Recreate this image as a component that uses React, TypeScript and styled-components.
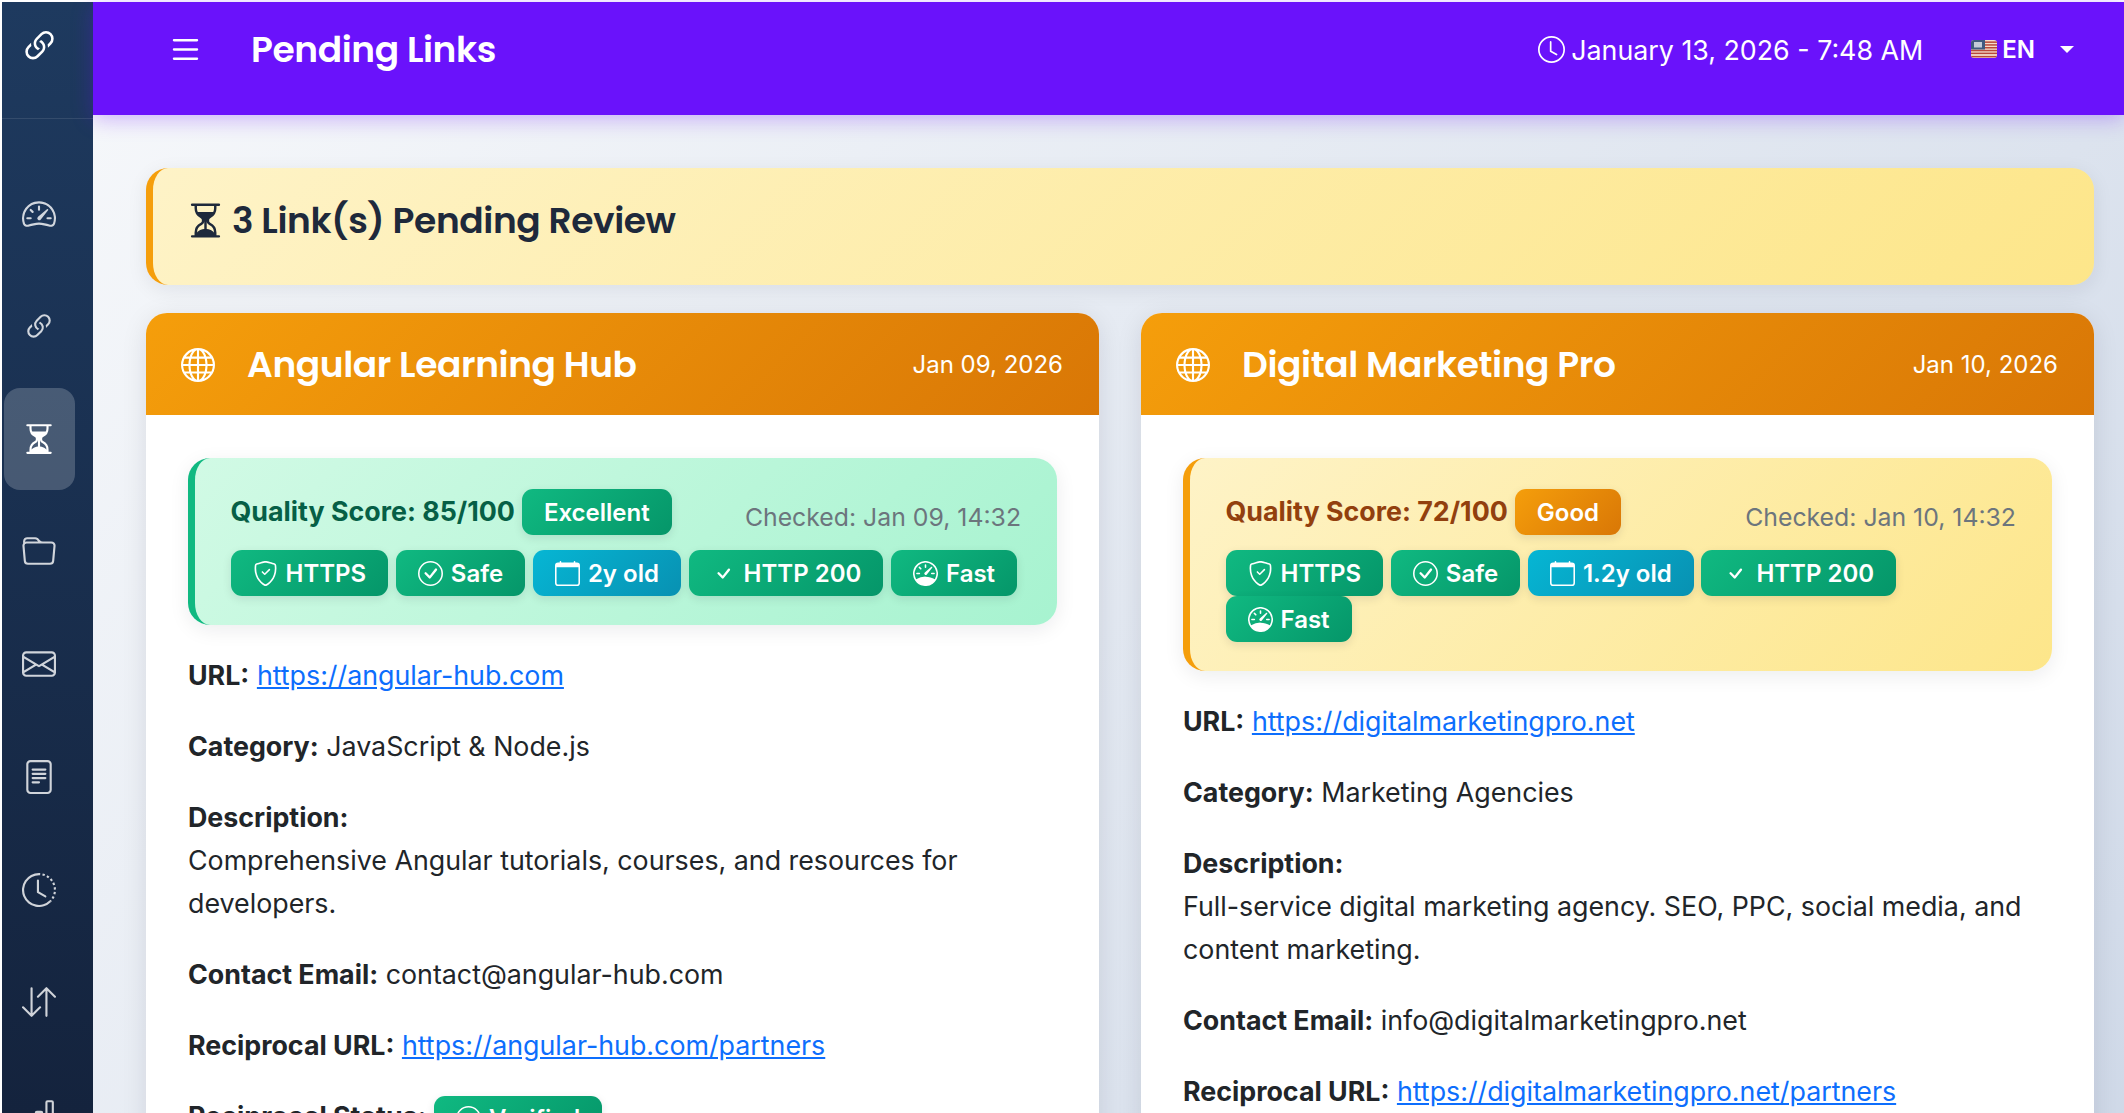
import React from 'react'
import styled, {createGlobalStyle, css} from 'styled-components'
import {
	BsArrowDownUp,
	BsBarChart,
	BsCalendar,
	BsCheck,
	BsCheckCircle,
	BsClock,
	BsClockHistory,
	BsEnvelope,
	BsFileText,
	BsFolder,
	BsGlobe,
	BsHourglassSplit,
	BsLink45Deg,
	BsList,
	BsShieldCheck,
	BsSpeedometer,
	BsSpeedometer2,
} from 'react-icons/bs'

type Tone = 'green' | 'amber' | 'blue'

type LinkCard = {
	title: string
	date: string
	score: string
	grade: string
	tone: Tone
	checked: string
	age: string
	url: string
	category: string
	description: string
	email: string
	reciprocal: string
}

const cards: LinkCard[] = [
	{
		title: 'Angular Learning Hub',
		date: 'Jan 09, 2026',
		score: 'Quality Score: 85/100',
		grade: 'Excellent',
		tone: 'green',
		checked: 'Checked: Jan 09, 14:32',
		age: '2y old',
		url: 'https://angular-hub.com',
		category: 'JavaScript & Node.js',
		description: 'Comprehensive Angular tutorials, courses, and resources for developers.',
		email: 'contact@angular-hub.com',
		reciprocal: 'https://angular-hub.com/partners',
	},
	{
		title: 'Digital Marketing Pro',
		date: 'Jan 10, 2026',
		score: 'Quality Score: 72/100',
		grade: 'Good',
		tone: 'amber',
		checked: 'Checked: Jan 10, 14:32',
		age: '1.2y old',
		url: 'https://digitalmarketingpro.net',
		category: 'Marketing Agencies',
		description: 'Full-service digital marketing agency. SEO, PPC, social media, and content marketing.',
		email: 'info@digitalmarketingpro.net',
		reciprocal: 'https://digitalmarketingpro.net/partners',
	},
]

const navIcons = [
	BsSpeedometer2,
	BsLink45Deg,
	BsHourglassSplit,
	BsFolder,
	BsEnvelope,
	BsFileText,
	BsClockHistory,
	BsArrowDownUp,
	BsBarChart,
]

const UsFlag = () => (
	<svg width="26" height="18" viewBox="0 0 26 18">
		<defs>
			<clipPath id="flagClip">
				<rect width="26" height="18" rx="3" />
			</clipPath>
		</defs>
		<g clipPath="url(#flagClip)">
			<rect width="26" height="18" fill="#f3dccb" />
			{[1.4, 4.2, 7, 9.8, 12.6, 15.9].map((y) => (
				<rect key={y} y={y} width="26" height="1.5" fill="#b9483a" />
			))}
			<rect width="14" height="9.5" fill="#3f5a80" />
			<rect x="3" y="2" width="8" height="5.5" fill="#c3cbd8" />
		</g>
	</svg>
)

const Card = ({card}: {card: LinkCard}) => (
	<CardBox>
		<CardHeader>
			<CardHeading>
				<BsGlobe />
				<span>{card.title}</span>
			</CardHeading>
			<CardDate>{card.date}</CardDate>
		</CardHeader>
		<CardBody>
			<QualityBox $tone={card.tone}>
				<QualityTop>
					<ScoreWrap>
						<ScoreText $tone={card.tone}>{card.score}</ScoreText>
						<Pill $tone={card.tone === 'green' ? 'green' : 'amber'}>{card.grade}</Pill>
					</ScoreWrap>
					<Checked>{card.checked}</Checked>
				</QualityTop>
				<PillRow>
					<Pill $tone="green">
						<BsShieldCheck />
						HTTPS
					</Pill>
					<Pill $tone="green">
						<BsCheckCircle />
						Safe
					</Pill>
					<Pill $tone="blue">
						<BsCalendar />
						{card.age}
					</Pill>
					<Pill $tone="green">
						<BsCheck />
						HTTP 200
					</Pill>
					<Pill $tone="green">
						<BsSpeedometer />
						Fast
					</Pill>
				</PillRow>
			</QualityBox>
			<Field>
				<b>URL:</b> <a href={card.url}>{card.url}</a>
			</Field>
			<Field>
				<b>Category:</b> {card.category}
			</Field>
			<Field>
				<b>Description:</b>
				<br />
				{card.description}
			</Field>
			<Field>
				<b>Contact Email:</b> {card.email}
			</Field>
			<Field>
				<b>Reciprocal URL:</b> <a href={card.reciprocal}>{card.reciprocal}</a>
			</Field>
			<Field>
				<b>Reciprocal Status:</b>{' '}
				<Pill $tone="green">
					<BsCheckCircle />
					Verified
				</Pill>
			</Field>
		</CardBody>
	</CardBox>
)

const App = () => (
	<>
		<GlobalStyle />
		<Shell>
			<Sidebar>
				<Brand>
					<BsLink45Deg />
				</Brand>
				<Nav>
					{navIcons.map((Icon, i) => (
						<NavItem key={i} $active={i === 2}>
							<Icon />
						</NavItem>
					))}
				</Nav>
			</Sidebar>
			<Content>
				<TopBar>
					<TopLeft>
						<Burger>
							<BsList />
						</Burger>
						<PageTitle>Pending Links</PageTitle>
					</TopLeft>
					<TopRight>
						<Clock>
							<BsClock />
							January 13, 2026 - 7:48 AM
						</Clock>
						<Lang>
							<UsFlag />
							EN
							<Caret />
						</Lang>
					</TopRight>
				</TopBar>
				<Main>
					<Banner>
						<BsHourglassSplit />
						<h2>3 Link(s) Pending Review</h2>
					</Banner>
					<CardGrid>
						{cards.map((c) => (
							<Card key={c.title} card={c} />
						))}
					</CardGrid>
				</Main>
			</Content>
		</Shell>
	</>
)

export default App

const GlobalStyle = createGlobalStyle`
	html, body {
		margin: 0;
		height: 100%;
		overflow: hidden;
		background: #fff;
	}
	* {
		box-sizing: border-box;
	}
	body {
		font-family: Inter, "Liberation Sans", sans-serif;
		color: #212529;
	}
`

const heading = `Poppins, "Noto Sans", Inter, sans-serif`

const gradients = {
	green: 'linear-gradient(135deg, #10b981, #059669)',
	amber: 'linear-gradient(135deg, #f59e0b, #d97706)',
	blue: 'linear-gradient(135deg, #06b6d4, #0891b2)',
}

const Shell = styled.div`
	display: flex;
	height: 1113px;
	padding: 2px 0 0 2px;
	overflow: hidden;
`

const Sidebar = styled.aside`
	width: 91px;
	flex-shrink: 0;
	overflow: hidden;
	background: linear-gradient(180deg, #1e3a5f 0%, #14233d 100%);
`

const Brand = styled.div`
	height: 117px;
	display: flex;
	align-items: center;
	justify-content: center;
	padding: 0 17px 27px 0;
	border-bottom: 1px solid rgba(255, 255, 255, 0.1);
	color: #fff;
	font-size: 41px;
`

const Nav = styled.nav`
	display: flex;
	flex-direction: column;
	align-items: flex-start;
	padding: 44px 0 0 1.5px;
	gap: 10.6px;
`

const NavItem = styled.div<{$active?: boolean}>`
	width: 71px;
	height: 102px;
	flex-shrink: 0;
	display: flex;
	align-items: center;
	justify-content: center;
	border-radius: 16px;
	font-size: 34px;
	color: rgba(255, 255, 255, 0.8);
	${(p) =>
		p.$active &&
		css`
			background: rgba(255, 255, 255, 0.2);
			color: #fff;
		`}
`

const Content = styled.div`
	flex: 1;
	min-width: 0;
	display: flex;
	flex-direction: column;
`

const TopBar = styled.header`
	height: 113px;
	flex-shrink: 0;
	display: flex;
	align-items: flex-start;
	justify-content: space-between;
	padding: 22px 50px 0 74px;
	background: #6a12fb;
	box-shadow: 0 4px 20px rgba(106, 18, 251, 0.3);
	position: relative;
	z-index: 1;
	color: #fff;
`

const TopLeft = styled.div`
	display: flex;
	align-items: center;
	height: 50px;
	gap: 47px;
`

const Burger = styled.div`
	font-size: 37px;
	display: flex;
`

const PageTitle = styled.h1`
	margin: 0;
	font-family: ${heading};
	font-size: 36px;
	font-weight: 600;
	letter-spacing: -0.4px;
`

const TopRight = styled.div`
	display: flex;
	align-items: center;
	height: 50px;
`

const Clock = styled.div`
	display: flex;
	align-items: center;
	gap: 6px;
	padding-top: 1px;
	font-size: 26.8px;
	svg {
		font-size: 27px;
	}
`

const Lang = styled.div`
	display: flex;
	align-items: center;
	margin-left: 48px;
	gap: 5px;
	font-size: 24px;
	font-weight: 600;
`

const Caret = styled.span`
	width: 0;
	height: 0;
	margin-left: 20px;
	border-left: 7px solid transparent;
	border-right: 7px solid transparent;
	border-top: 7px solid #fff;
`

const Main = styled.main`
	flex: 1;
	min-height: 0;
	padding: 53px 30px 0 53px;
	background: linear-gradient(135deg, #f5f7fa 0%, #c3cfe2 100%) no-repeat;
	background-size: 100% 2000px;
`

const Banner = styled.div`
	height: 117px;
	display: flex;
	align-items: center;
	gap: 7px;
	padding: 0 0 12px 33px;
	border-left: 7px solid #f59e0b;
	border-radius: 22px;
	background: linear-gradient(135deg, #fef3c7, #fde68a);
	box-shadow: 0 5px 20px rgba(15, 23, 42, 0.08);
	font-size: 39px;
	h2 {
		margin: 0;
		font-family: ${heading};
		font-size: 36px;
		font-weight: 600;
		letter-spacing: -0.4px;
		color: #1e293b;
	}
	svg {
		color: #1e293b;
	}
`

const CardGrid = styled.div`
	display: grid;
	grid-template-columns: 1fr 1fr;
	gap: 42px;
	margin-top: 28px;
`

const CardBox = styled.article`
	border-radius: 21px 21px 0 0;
	background: #fff;
	box-shadow: 0 5px 26px rgba(15, 23, 42, 0.1);
	overflow: hidden;
`

const CardHeader = styled.div`
	height: 102px;
	display: flex;
	align-items: center;
	justify-content: space-between;
	padding: 1px 36px 0 35px;
	color: #fff;
	background: ${gradients.amber};
`

const CardHeading = styled.div`
	display: flex;
	align-items: center;
	gap: 32px;
	font-family: ${heading};
	font-size: 36px;
	font-weight: 600;
	letter-spacing: -0.4px;
	svg {
		font-size: 34px;
	}
`

const CardDate = styled.div`
	font-size: 24px;
`

const CardBody = styled.div`
	padding: 43px 42px;
`

const QualityBox = styled.div<{$tone: Tone}>`
	padding: 30px 36px 29px 35.5px;
	margin-bottom: 29px;
	border-radius: 22px;
	border-left: 7px solid ${(p) => (p.$tone === 'green' ? '#10b981' : '#f59e0b')};
	background: ${(p) =>
		p.$tone === 'green'
			? 'linear-gradient(135deg, #d1fae5, #a7f3d0)'
			: 'linear-gradient(135deg, #fef3c7, #fde68a)'};
	box-shadow: 0 5px 20px rgba(15, 23, 42, 0.08);
`

const QualityTop = styled.div`
	display: flex;
	justify-content: space-between;
	align-items: flex-end;
	margin-bottom: 15px;
`

const ScoreWrap = styled.div`
	display: flex;
	align-items: center;
	gap: 7px;
	padding-top: 1px;
`

const ScoreText = styled.span<{$tone: Tone}>`
	padding-bottom: 2px;
	font-size: 26.8px;
	font-weight: 700;
	color: ${(p) => (p.$tone === 'green' ? '#065f46' : '#92400e')};
`

const Checked = styled.span`
	font-size: 24.8px;
	color: #6c757d;
	padding-bottom: 3px;
`

const PillRow = styled.div`
	display: flex;
	flex-wrap: wrap;
	column-gap: 7.7px;
`

const Pill = styled.span<{$tone: Tone}>`
	display: inline-flex;
	align-items: center;
	gap: 8px;
	height: 46px;
	padding: 0 22px;
	border-radius: 11px;
	color: #fff;
	font-size: 24px;
	font-weight: 600;
	white-space: nowrap;
	background: ${(p) => gradients[p.$tone]};
	box-shadow: 0 3px 10px rgba(15, 23, 42, 0.1);
	svg {
		font-size: 25px;
	}
`

const Field = styled.p`
	margin: 0 0 28px;
	font-size: 26.8px;
	line-height: 43px;
	color: #212529;
	b {
		font-weight: 700;
	}
	a {
		color: #0d6efd;
	}
	${Pill} {
		vertical-align: middle;
	}
`
